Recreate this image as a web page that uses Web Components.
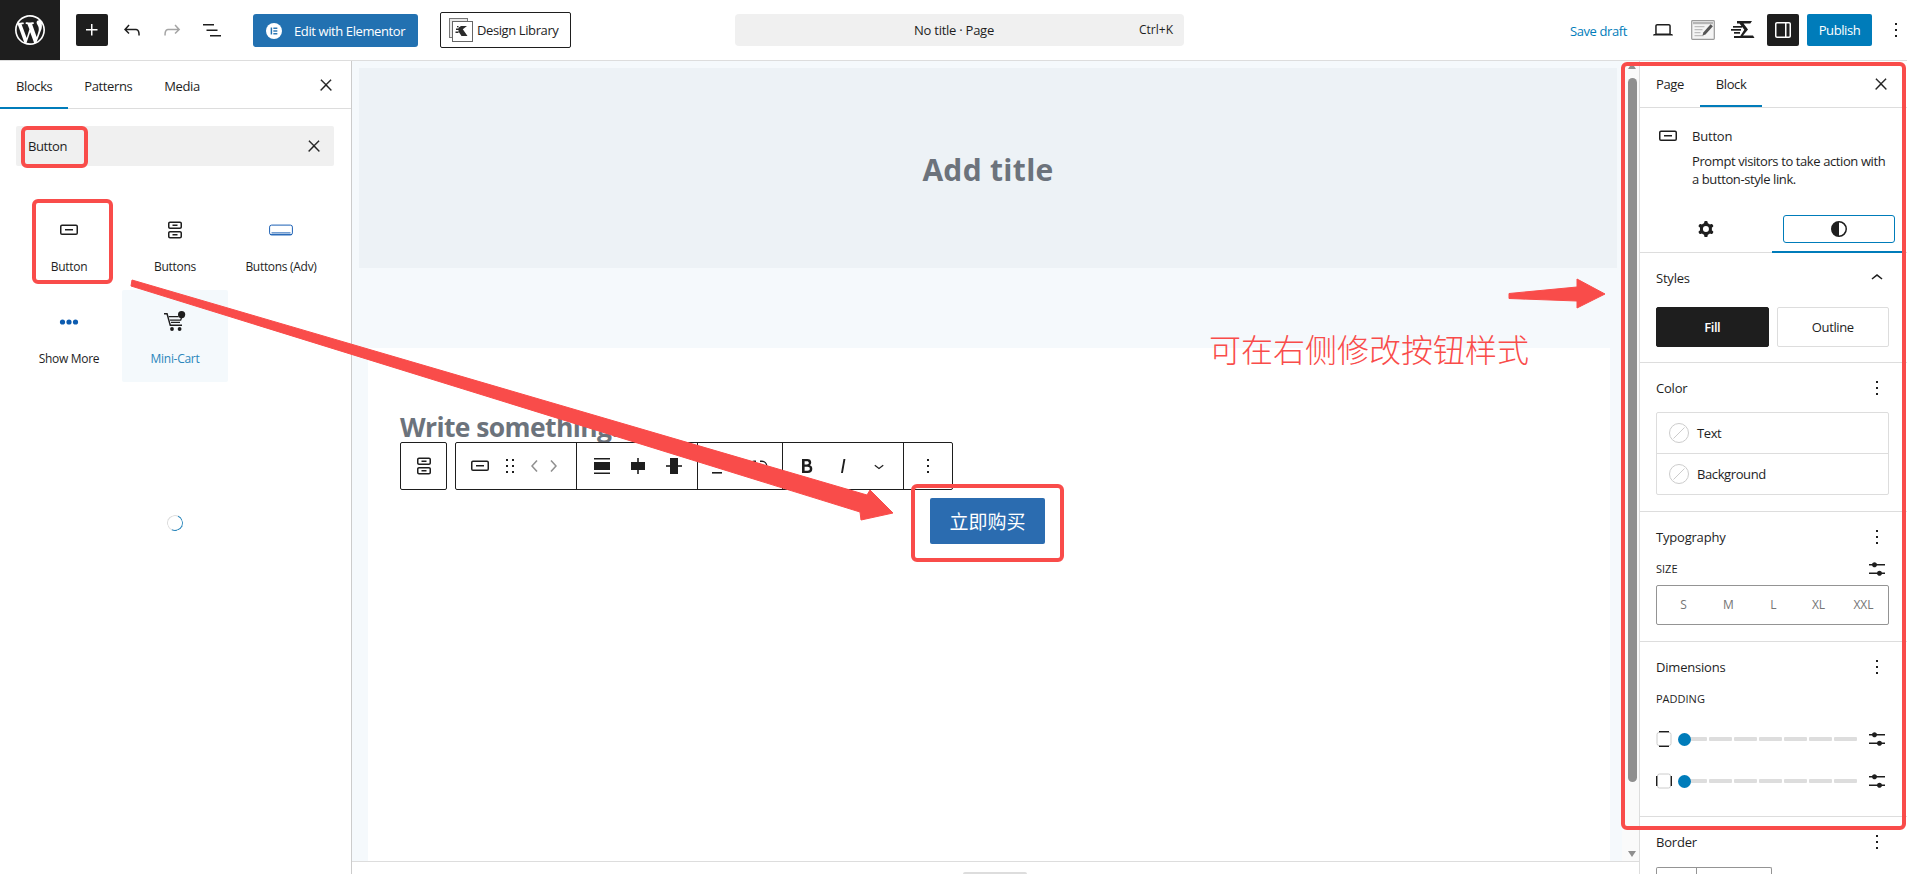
<!DOCTYPE html>
<html lang="en">
<head>
<meta charset="utf-8">
<title>No title - Page</title>
<style>
	html, body { margin: 0; padding: 0; height: 100%; overflow: hidden; background: #fff; }
	body { font: 13px/18px "Open Sans", "Noto Sans CJK SC", sans-serif; color: #1e1e1e; letter-spacing: -.4px; }
</style>
</head>
<body>
<wp-app>
	<wp-topbar slot="top"></wp-topbar>
	<wp-inserter slot="left"></wp-inserter>
	<wp-canvas slot="center"></wp-canvas>
	<wp-settings slot="right"></wp-settings>
	<wp-notes slot="notes"></wp-notes>
</wp-app>

<script>
const p = (d, extra = '') => `<path d="${d}" ${extra}/>`;

const ICONS = {
	wp: { box: '-2 -2 24 24', body: p('M20 10c0-5.51-4.49-10-10-10C4.48 0 0 4.49 0 10c0 5.52 4.48 10 10 10 5.51 0 10-4.48 10-10zM7.78 15.37L4.37 6.22c.55-.02 1.17-.08 1.17-.08.5-.06.44-1.13-.06-1.11 0 0-1.45.11-2.37.11-.18 0-.37 0-.58-.01C4.12 2.69 6.87 1.11 10 1.11c2.33 0 4.45.87 6.05 2.34-.68-.11-1.65.39-1.65 1.58 0 .74.45 1.36.9 2.1.35.61.55 1.36.55 2.46 0 1.49-1.4 5-1.4 5l-3.03-8.37c.54-.02.82-.17.82-.17.5-.05.44-1.25-.06-1.22 0 0-1.44.12-2.38.12-.87 0-2.33-.12-2.33-.12-.5-.03-.56 1.2-.06 1.22l.92.08 1.26 3.41zM17.41 10c.24-.64.74-1.87.43-4.25.7 1.29 1.05 2.71 1.05 4.25 0 3.29-1.73 6.24-4.4 7.78.97-2.59 1.94-5.2 2.92-7.78zM6.1 18.09C3.12 16.65 1.11 13.53 1.11 10c0-1.3.23-2.48.72-3.59C3.25 10.3 4.67 14.2 6.1 18.09zm4.03-6.63l2.58 6.98c-.86.29-1.76.45-2.71.45-.79 0-1.57-.11-2.29-.33.81-2.38 1.62-4.74 2.42-7.1z') },
	plus: { body: p('M11 12.5V17.5H12.5V12.5H17.5V11H12.5V6H11V11H6V12.5H11Z') },
	undo: { body: p('M18.3 11.7c-.6-.6-1.4-.9-2.3-.9H6.7l2.9-3.3-1.1-1-4.5 5L8.5 16l1-1-2.7-2.7H16c.5 0 .9.2 1.3.5 1 1 1 3.4 1 4.5v.3h1.5v-.2c0-1.5 0-4.3-1.5-5.7z') },
	redo: { body: p('M15.6 6.5l-1.1 1 2.9 3.3H8c-.9 0-1.7.3-2.3.9-1.4 1.5-1.4 4.2-1.4 5.6v.2h1.5v-.3c0-1.1 0-3.5 1-4.5.3-.3.7-.5 1.3-.5h9.2L14.5 15l1.1 1.1 4.6-4.6-4.6-5z') },
	list: { body: p('M3 6h11v1.5H3V6Zm3.5 5.5h11V13h-11v-1.5ZM21 17H10v1.5h11V17Z') },
	close: { box: '-4 -4 32 32', body: p('M13 11.8l6.1-6.3-1-1-6.1 6.2-6.1-6.2-1 1 6.1 6.3-6.5 6.7 1 1 6.5-6.6 6.5 6.6 1-1z', 'stroke="currentColor" stroke-width=".5"') },
	dots: { body: p('M13 19h-2v-2h2v2zm0-6h-2v-2h2v2zm0-6h-2V5h2v2z') },
	button: { body: p('M8 12.5h8V11H8v1.5Z M19 6.5H5a2 2 0 0 0-2 2V15a2 2 0 0 0 2 2h14a2 2 0 0 0 2-2V8.5a2 2 0 0 0-2-2ZM5 8h14a.5.5 0 0 1 .5.5V15a.5.5 0 0 1-.5.5H5a.5.5 0 0 1-.5-.5V8.5A.5.5 0 0 1 5 8Z') },
	buttons: { body: p('M14.5 17.5H9.5V16H14.5V17.5Z M14.5 8H9.5V6.5H14.5V8Z M7 3.5H17C18.1 3.5 19 4.4 19 5.5V9C19 10.1 18.1 11 17 11H7C5.9 11 5 10.1 5 9V5.5C5 4.4 5.9 3.5 7 3.5ZM17 5H7C6.7 5 6.5 5.2 6.5 5.5V9C6.5 9.3 6.7 9.5 7 9.5H17C17.3 9.5 17.5 9.3 17.5 9V5.5C17.5 5.2 17.3 5 17 5Z M7 13H17C18.1 13 19 13.9 19 15V18.5C19 19.6 18.1 20.5 17 20.5H7C5.9 20.5 5 19.6 5 18.5V15C5 13.9 5.9 13 7 13ZM17 14.5H7C6.7 14.5 6.5 14.7 6.5 15V18.5C6.5 18.8 6.7 19 7 19H17C17.3 19 17.5 18.8 17.5 18.5V15C17.5 14.7 17.3 14.5 17 14.5Z') },
	buttonsadv: { box: '0 0 24 24', body: '<rect x=".6" y="7.1" width="22.8" height="9.8" rx="2" fill="none" stroke="currentColor" stroke-width="1"/><rect x="2.500" y="14.400" width="19" height="1"/><rect x="1" y="16.200" width="22" height=".9"/>' },
	more: { body: '<circle cx="5.5" cy="12" r="2.6"/><circle cx="12" cy="12" r="2.6"/><circle cx="18.5" cy="12" r="2.6"/>' },
	cart: { box: '0 0 24 24', body: '<circle cx="18.6" cy="4.6" r="3.6"/><path d="M1 3h3.6l3.2 11.4H19v1.5H6.7L3.5 4.5H1z"/><path d="M5.6 6h10v1.3H6zM6.8 9.4h10.4l.6-1.6 1.3.5-1 2.4H7.2zM16 6.5l1 0" /><path d="M8 11.8h9v1.2H8z"/><circle cx="9" cy="19" r="1.9"/><circle cx="16.6" cy="19" r="1.9"/>' },
	cog: { body: p('M10.289 4.836A1 1 0 0 1 11.275 4h1.306a1 1 0 0 1 .987.836l.244 1.466c.787.26 1.503.679 2.108 1.218l1.393-.522a1 1 0 0 1 1.216.437l.653 1.13a1 1 0 0 1-.23 1.273l-1.148.944a6.025 6.025 0 0 1 0 2.435l1.149.946a1 1 0 0 1 .23 1.272l-.653 1.13a1 1 0 0 1-1.216.437l-1.394-.522c-.605.54-1.32.958-2.108 1.218l-.244 1.466a1 1 0 0 1-.987.836h-1.306a1 1 0 0 1-.986-.836l-.244-1.466a5.995 5.995 0 0 1-2.108-1.218l-1.394.522a1 1 0 0 1-1.217-.436l-.653-1.131a1 1 0 0 1 .23-1.272l1.149-.946a6.026 6.026 0 0 1 0-2.435l-1.148-.944a1 1 0 0 1-.23-1.272l.653-1.131a1 1 0 0 1 1.217-.437l1.393.522a5.994 5.994 0 0 1 2.108-1.218l.244-1.466ZM14.929 12a3 3 0 1 1-6 0 3 3 0 0 1 6 0Z', 'fill-rule="evenodd"') },
	contrast: { body: p('M12 4a8 8 0 1 0 0 16 8 8 0 0 0 0-16zm0 1.5a6.5 6.5 0 0 1 0 13z', 'fill-rule="evenodd"') },
	up: { body: p('M6.5 12.4L12 8l5.5 4.4-.9 1.2L12 10l-4.6 3.6-.9-1.2z') },
	down: { body: p('M17.5 11.6L12 16l-5.5-4.4.9-1.2L12 14l4.6-3.6 1 1.2z') },
	sliders: { body: p('M14.5 13.8c-1.1 0-2.1.7-2.4 1.8H4V17h8.1c.3 1 1.3 1.8 2.4 1.8s2.1-.7 2.4-1.8H20v-1.5h-3.1c-.3-1-1.3-1.7-2.4-1.7zM11.9 7c-.3-1-1.3-1.8-2.4-1.8S7.4 6 7.1 7H4v1.5h3.1c.3 1 1.3 1.8 2.4 1.8s2.1-.7 2.4-1.8H20V7h-8.1z') },
	drag: { body: p('M8 7h2V5H8v2zm0 6h2v-2H8v2zm0 6h2v-2H8v2zm6-14v2h2V5h-2zm0 8h2v-2h-2v2zm0 6h2v-2h-2v2z') },
	chevl: { body: p('M14.6 7l-1.2-1L8 12l5.400 6 1.200-1-4.600-5z') },
	chevr: { body: p('M10.600 6L9.400 7l4.600 5-4.600 5 1.200 1 5.400-6z') },
	laptop: { body: p('M20.5 16h-.7V8c0-1.1-.9-2-2-2H6.2c-1.1 0-2 .9-2 2v8h-.7c-.8 0-1.5.7-1.5 1.5h20c0-.8-.7-1.5-1.5-1.5zM5.7 8c0-.3.2-.5.5-.5h11.600c.3 0 .5.2.5.5v7.600H5.700V8z') },
	panel: { body: p('M18 4H6c-1.1 0-2 .9-2 2v12c0 1.1.9 2 2 2h12c1.1 0 2-.9 2-2V6c0-1.1-.9-2-2-2zM5.500 18V6c0-.3.2-.5.5-.5h8v13H6c-.3 0-.5-.2-.5-.5zm13 0c0 .3-.2.5-.5.5h-2.500v-13H18c.3 0 .5.2.5.5v12z') },
	alignA: { body: '<rect x="4" y="4" width="16" height="1.5"/><rect x="4" y="8" width="16" height="8"/><rect x="4" y="18.5" width="16" height="1.5"/>' },
	alignB: { body: '<rect x="11.2" y="4" width="1.6" height="16"/><rect x="5" y="8" width="14" height="8"/>' },
	alignC: { body: '<rect x="4" y="11.2" width="16" height="1.6"/><rect x="8" y="4" width="8" height="16"/>' },
	link: { body: p('M10 17.400H8a5.400 5.400 0 0 1 0-10.800h2V8H8a4 4 0 0 0 0 8h2zM14 6.600h2a5.400 5.400 0 0 1 0 10.800h-2V16h2a4 4 0 0 0 0-8h-2z') },
	underline: { body: '<rect x="5" y="18" width="10" height="1.6"/>' },
	italic: { body: p('M12.500 5L10 19h1.900l2.500-14z') },
	bold: { body: p('M14.700 11.300c1-.6 1.500-1.600 1.500-3 0-2.300-1.300-3.400-4-3.400H7v14h5.800c1.400 0 2.500-.3 3.300-1 .8-.7 1.200-1.700 1.200-2.900.1-1.900-.8-3.100-2.600-3.700zm-5.100-4h2.300c.6 0 1.100.1 1.400.4.3.3.5.7.5 1.200s-.2 1-.5 1.200c-.3.3-.8.4-1.400.4H9.600V7.300zm4.600 9c-.4.3-1 .4-1.700.4H9.600v-3.900h2.900c.7 0 1.300.2 1.700.5.4.3.6.8.6 1.500s-.2 1.200-.6 1.500z') },
	edit: { box: '0 0 24 24', body: '<rect x=".7" y="2.700" width="22.600" height="18.600" rx=".8" fill="#f4f4f4" stroke="#9a9a9a" stroke-width="1.200"/><path d="M2 4h20v2.200H2z" fill="#b5b5b5"/><path d="M3.500 8h10v1.300h-10zM3.500 11h8v1.300h-8zM3.500 14h6v1.300h-6zM3.500 17h9v1.300h-9z" fill="#bdbdbd"/><path d="M19.600 6.200l2.300 2-7.400 8.200-3 1 .8-3z" fill="#555"/>' },
	speed: { box: '0 0 24 24', body: p('M6 3h15l-1.700 2.400H12.500l4.500 6-5 6.100H22L23.500 20H8l5.300-8.200L8.500 5.400H6z') + '<rect x="2" y="8" width="9" height="1.700"/><rect x="0" y="11" width="10" height="1.700"/><rect x="3" y="14" width="6" height="1.700"/><rect x="3" y="18" width="7" height="2"/>' },
	library: { box: '0 0 24 24', body: '<rect x=".5" y=".5" width="18" height="19" fill="#e9e9e9" stroke="#777"/><rect x="3.500" y="3.500" width="20" height="20" fill="#fff" stroke="#666"/><path d="M8 8h1.500v1.800L12 8h6l-4.200 3.200L18.500 18h-6l-3-4.500V15H6.500v-1.500H9.500V12H7v-1.500h2.500V9.300H8z" fill="#2b2b2b"/>' },
	elementor: { box: '0 0 24 24', body: '<circle cx="12" cy="12" r="12" fill="#fff"/><rect x="7" y="6.800" width="2.200" height="10.400" fill="#2271b1"/><rect x="11" y="6.800" width="6" height="2.100" fill="#2271b1"/><rect x="11" y="10.950" width="6" height="2.100" fill="#2271b1"/><rect x="11" y="15.100" width="6" height="2.100" fill="#2271b1"/>' },
	pad1: { box: '0 0 16 16', body: '<rect x="1" y="1.500" width="14" height="13" rx="2" fill="none" stroke="#ccc"/><rect x="3" y="0" width="10" height="1.300" fill="#1e1e1e"/><rect x="3" y="14.700" width="10" height="1.300" fill="#1e1e1e"/>' },
	pad2: { box: '0 0 16 16', body: '<rect x="1.500" y="1" width="13" height="14" rx="2" fill="none" stroke="#ccc"/><rect x="0" y="3" width="1.300" height="10" fill="#1e1e1e"/><rect x="14.700" y="3" width="1.300" height="10" fill="#1e1e1e"/>' },
	none: { box: '0 0 20 20', body: '<circle cx="10" cy="10" r="9.500" fill="#fff" stroke="#ccc"/><path d="M4.500 15.500L15.500 4.500" stroke="#ccc" fill="none"/>' }
};

class WpIcon extends HTMLElement {
	connectedCallback() {
		const icon = ICONS[this.getAttribute('name')];
		const size = this.getAttribute('size') || 24;
		this.attachShadow({ mode: 'open' }).innerHTML = `
			<style>
				:host { display: inline-flex; flex: none; width: ${size}px; height: ${size}px; }
				svg { display: block; fill: currentColor; }
			</style>
			<svg xmlns="http://www.w3.org/2000/svg" width="${size}" height="${size}" viewBox="${icon.box || '0 0 24 24'}">${icon.body}</svg>
		`;
	}
}

class WpApp extends HTMLElement {
	constructor() {
		super();
		this.attachShadow({ mode: 'open' }).innerHTML = `
			<style>
				:host {
					display: grid;
					position: relative;
					width: 1907px;
					height: 874px;
					overflow: hidden;
					grid-template: 61px 813px / 352px 1287px 268px;
				}
				::slotted([slot="top"]) { grid-column: 1 / -1; }
			</style>
			<slot name="top"></slot>
			<slot name="left"></slot>
			<slot name="center"></slot>
			<slot name="right"></slot>
			<slot name="notes"></slot>
		`;
	}
}

class WpTopbar extends HTMLElement {
	constructor() {
		super();
		this.attachShadow({ mode: 'open' }).innerHTML = `
			<style>
				:host {
					display: flex;
					align-items: flex-start;
					height: 60px;
					border-bottom: 1px solid #ddd;
					background: #fff;
					font-size: 13px;
				}
				.logo {
					display: flex; align-items: center; justify-content: center;
					width: 60px; height: 60px;
					background: #1e1e1e; color: #fff;
				}
				.tool { margin-top: 18px; display: flex; }
				.tool.off { color: #a5a5a5; }
				.inserter {
					display: flex; align-items: center; justify-content: center;
					width: 32px; height: 32px; margin: 14px 0 0 16px;
					background: #1e1e1e; color: #fff; border-radius: 2px;
				}
				.elementor {
					display: flex; align-items: center;
					width: 165px; height: 33px; margin: 14px 0 0 29px; padding-left: 13px;
					box-sizing: border-box;
					background: #2271b1; color: #fff; border-radius: 3px;
				}
				.elementor span { margin-left: 12px; }
				.library {
					display: flex; align-items: center;
					width: 131px; height: 36px; margin: 12px 0 0 22px; padding-left: 8px;
					box-sizing: border-box;
					border: 1px solid #1e1e1e; border-radius: 2px;
				}
				.library span { margin-left: 4px; }
				.command {
					display: grid; grid-template-columns: 1fr auto 1fr; align-items: center;
					width: 449px; height: 32px; margin: 14px 0 0 164px; padding: 0 11px 0 0;
					box-sizing: border-box;
					background: #f0f0f0; border-radius: 4px; letter-spacing: -.25px;
				}
				.command span:last-child { justify-self: end; font-size: 12px; letter-spacing: 0; }
				.right { display: flex; align-items: flex-start; margin-left: auto; }
				.save { margin-top: 22px; color: #007cba; white-space: nowrap; margin-right: 24px; }
				.right .tool + .tool { margin-left: 16px; }
				.panel {
					display: flex; align-items: center; justify-content: center;
					width: 32px; height: 32px; margin: 14px 0 0 12px;
					background: #1e1e1e; color: #fff; border-radius: 2px;
				}
				.publish {
					display: flex; align-items: center; justify-content: center;
					width: 65px; height: 32px; margin: 14px 0 0 8px;
					background: #007cba; color: #fff; border-radius: 2px;
				}
				.more { width: 23px; margin: 18px 0 0 12px; }
			</style>
			<div class="logo"><wp-icon name="wp" size="36"></wp-icon></div>
			<div class="inserter"><wp-icon name="plus"></wp-icon></div>
			<div class="tool" style="margin-left:12px"><wp-icon name="undo"></wp-icon></div>
			<div class="tool off" style="margin-left:16px"><wp-icon name="redo"></wp-icon></div>
			<div class="tool" style="margin-left:16px"><wp-icon name="list"></wp-icon></div>
			<div class="elementor"><wp-icon name="elementor" size="16"></wp-icon><span>Edit with Elementor</span></div>
			<div class="library"><wp-icon name="library" size="24"></wp-icon><span>Design Library</span></div>
			<div class="command"><span></span><span>No title · Page</span><span>Ctrl+K</span></div>
			<div class="right">
				<span class="save">Save draft</span>
				<div class="tool"><wp-icon name="laptop"></wp-icon></div>
				<div class="tool"><wp-icon name="edit"></wp-icon></div>
				<div class="tool"><wp-icon name="speed"></wp-icon></div>
				<div class="panel"><wp-icon name="panel"></wp-icon></div>
				<div class="publish">Publish</div>
				<div class="tool more"><wp-icon name="dots"></wp-icon></div>
			</div>
		`;
	}
}

class BlockItem extends HTMLElement {
	connectedCallback() {
		const icon = this.getAttribute('icon');
		this.attachShadow({ mode: 'open' }).innerHTML = `
			<style>
				:host {
					display: flex; flex-direction: column; align-items: center;
					height: 92px; padding-top: 20px; box-sizing: border-box;
					font-size: 12px; line-height: 18px; border-radius: 2px;
					color: #1e1e1e; letter-spacing: -.3px;
				}
				:host([active]) { background: #f4f9fc; color: #2a86bb; }
				wp-icon { color: ${this.getAttribute('tint') || '#1e1e1e'}; }
				span { margin-top: 16px; white-space: nowrap; }
			</style>
			<wp-icon name="${icon}"></wp-icon>
			<span><slot></slot></span>
		`;
	}
}

class WpInserter extends HTMLElement {
	constructor() {
		super();
		this.attachShadow({ mode: 'open' }).innerHTML = `
			<style>
				:host {
					display: flex; flex-direction: column;
					border-right: 1px solid #ccc;
					background: #fff;
				}
				.tabs {
					display: flex; align-items: center; height: 47px;
					border-bottom: 1px solid #ddd;
					padding-right: 13px;
				}
				.tabs span { padding: 2px 16px 0; height: 46px; line-height: 46px; }
				.tabs .on { box-shadow: inset 0 -2px 0 #007cba; }
				.tabs wp-icon { margin-left: auto; }
				.search {
					display: flex; align-items: center; justify-content: space-between;
					height: 40px; margin: 17px 17px 0 16px; padding: 0 8px 0 12px;
					background: #f0f0f0; border-radius: 2px;
				}
				.grid {
					display: grid; grid-template-columns: repeat(3, 106px);
					margin: 32px 0 0 16px;
				}
				.spin {
					width: 16px; height: 16px; margin: 133px 0 0 167px;
					border-radius: 50%; box-sizing: border-box;
					border: 1.500px solid #ddd;
					border-right-color: #2a86bb; border-bottom-color: #2a86bb;
					transform: rotate(-20deg);
				}
			</style>
			<div class="tabs">
				<span class="on">Blocks</span><span>Patterns</span><span>Media</span>
				<wp-icon name="close"></wp-icon>
			</div>
			<div class="search"><span>Button</span><wp-icon name="close"></wp-icon></div>
			<div class="grid">
				<block-item icon="button">Button</block-item>
				<block-item icon="buttons">Buttons</block-item>
				<block-item icon="buttonsadv" tint="#1a5fb4">Buttons (Adv)</block-item>
				<block-item icon="more" tint="#0d5cb0">Show More</block-item>
				<block-item icon="cart" active>Mini-Cart</block-item>
			</div>
			<div class="spin"></div>
		`;
	}
}

class BlockToolbar extends HTMLElement {
	constructor() {
		super();
		const tb = (name, w = 36, size = 24) =>
			`<span class="b" style="width:${w}px"><wp-icon name="${name}" size="${size}"></wp-icon></span>`;
		this.attachShadow({ mode: 'open' }).innerHTML = `
			<style>
				:host {
					display: flex; position: absolute; left: 32px; top: 94px;
					height: 48px; color: #1e1e1e;
				}
				.box {
					display: flex; height: 48px; box-sizing: border-box;
					border: 1px solid #1e1e1e; border-radius: 2px; background: #fff;
				}
				.first { width: 47px; align-items: center; justify-content: center; margin-right: 8px; }
				.main { width: 498px; }
				.g { display: flex; align-items: center; box-sizing: border-box; height: 46px; border-left: 1px solid #1e1e1e; padding-left: 7px; }
				.g:first-child { border-left: 0; }
				.b { display: flex; align-items: center; justify-content: center; }
				.off { color: #909090; }
			</style>
			<div class="box first"><wp-icon name="buttons"></wp-icon></div>
			<div class="box main">
				<div class="g" style="width:120px;padding-left:12px">
					${tb('button', 24)}
					<span class="b" style="width:24px;margin-left:6px"><wp-icon name="drag"></wp-icon></span>
					<span class="b off" style="width:18px;margin-left:4px"><wp-icon name="chevl"></wp-icon></span>
					<span class="b off" style="width:18px"><wp-icon name="chevr"></wp-icon></span>
				</div>
				<div class="g" style="width:121px">${tb('alignA')}${tb('alignB')}${tb('alignC')}</div>
				<div class="g" style="width:86px;padding-left:3px">${tb('underline', 36)}${tb('link', 42)}</div>
				<div class="g" style="width:121px;padding-left:6px">${tb('bold')}${tb('italic')}${tb('down', 36, 20)}</div>
				<div class="g" style="width:49px;padding-left:0;justify-content:center">${tb('dots', 24)}</div>
			</div>
		`;
	}
}

class WpCanvas extends HTMLElement {
	constructor() {
		super();
		this.attachShadow({ mode: 'open' }).innerHTML = `
			<style>
				:host { display: flex; flex-direction: column; min-width: 0; background: #fff; }
				.scroll { display: flex; flex: 1; min-height: 0; background: #f5f9fc; }
				.page { flex: 1; min-width: 0; display: flex; flex-direction: column; padding: 7px 5px 0 7px; }
				.title {
					display: flex; align-items: center; justify-content: center;
					height: 200px; flex: none; box-sizing: border-box; padding-top: 4px;
					background: #edf2f6; color: #6c737c;
					font: 700 30px/40px "Open Sans", sans-serif; letter-spacing: .3px;
				}
				.body {
					position: relative; flex: 1;
					margin: 80px 7px 0 9px; padding: 60px 0 0 32px;
					background: #fff; overflow: visible;
				}
				.write { color: #6c737c; font: 700 26.500px/38px "Open Sans", sans-serif; letter-spacing: -.6px; }
				.buy {
					display: flex; align-items: center; justify-content: center;
					width: 115px; height: 46px; margin: 52px 0 0 530px;
					background: #2b6cb0; color: #fff; border-radius: 2px;
					font: 19px/24px "Noto Sans CJK SC", sans-serif; letter-spacing: 0;
				}
				.bar {
					position: relative; flex: none; width: 17px; background: #fafafa;
				}
				.thumb { position: absolute; left: 6px; top: 17px; width: 9px; height: 704px; background: #8f8f8f; border-radius: 5px; }
				.arrow { position: absolute; left: 6px; width: 0; height: 0; border-left: 4.500px solid transparent; border-right: 4.500px solid transparent; }
				.arrow.a { top: 2px; border-bottom: 6px solid #8f8f8f; }
				.arrow.b { bottom: 4px; border-top: 6px solid #8f8f8f; }
				.foot { position: relative; flex: none; height: 12px; border-top: 1px solid #ddd; background: #fff; }
				.handle { position: absolute; left: 611px; top: 10px; width: 64px; height: 4px; border-radius: 2px 2px 0 0; background: #ddd; }
			</style>
			<div class="scroll">
				<div class="page">
					<div class="title">Add title</div>
					<div class="body">
						<div class="write">Write something...</div>
						<block-toolbar></block-toolbar>
						<div class="buy">立即购买</div>
					</div>
				</div>
				<div class="bar">
					<div class="arrow a"></div>
					<div class="thumb"></div>
					<div class="arrow b"></div>
				</div>
			</div>
			<div class="foot"><div class="handle"></div></div>
		`;
	}
}

class PanelSection extends HTMLElement {
	connectedCallback() {
		const action = this.getAttribute('action') || 'dots';
		this.attachShadow({ mode: 'open' }).innerHTML = `
			<style>
				:host {
					display: block; flex: none;
					padding: 16px 18px ${this.getAttribute('pad') || 15}px 16px;
					border-bottom: 1px solid #ddd;
				}
				.head { display: flex; align-items: center; justify-content: space-between; height: 18px; font-weight: 500; letter-spacing: -.2px; }
			</style>
			<div class="head"><span>${this.getAttribute('heading')}</span><wp-icon name="${action}"></wp-icon></div>
			<slot></slot>
		`;
	}
}

class WpSlider extends HTMLElement {
	connectedCallback() {
		this.attachShadow({ mode: 'open' }).innerHTML = `
			<style>
				:host { display: flex; align-items: center; height: 24px; }
				.track { position: relative; display: flex; gap: 2px; width: 177px; margin: 0 8px; padding-left: 4px; box-sizing: border-box; }
				.track i { flex: 1; height: 4px; background: #ddd; border-radius: 1px; }
				.thumb { position: absolute; left: -2px; top: -4.500px; width: 13px; height: 13px; border-radius: 50%; background: #007cba; }
			</style>
			<wp-icon name="${this.getAttribute('icon')}" size="16"></wp-icon>
			<div class="track"><i></i><i></i><i></i><i></i><i></i><i></i><i></i><span class="thumb"></span></div>
			<wp-icon name="sliders"></wp-icon>
		`;
	}
}

class WpSettings extends HTMLElement {
	constructor() {
		super();
		const colorRow = (label, extra = '') =>
			`<div class="crow" style="${extra}"><wp-icon name="none" size="20"></wp-icon><span>${label}</span></div>`;
		this.attachShadow({ mode: 'open' }).innerHTML = `
			<style>
				:host {
					display: flex; flex-direction: column; overflow: hidden;
					border-left: 1px solid #ddd; background: #fff;
				}
				.tabs { display: flex; align-items: center; flex: none; height: 46px; border-bottom: 1px solid #ddd; padding-right: 14px; }
				.tabs span { padding: 0 16px; line-height: 46px; height: 46px; }
				.tabs .on { box-shadow: inset 0 -2px 0 #007cba; }
				.tabs wp-icon { margin-left: auto; }
				.card { display: flex; flex: none; padding: 16px 18px 0 16px; }
				.card wp-icon { margin-right: 12px; }
				.card b { display: block; font-weight: 500; line-height: 24px; letter-spacing: -.2px; }
				.card p { margin: 4px 0 0; white-space: nowrap; }
				.mode { display: grid; grid-template-columns: 132px 130px; flex: none; height: 45px; margin-top: 20px; box-sizing: border-box; border-bottom: 1px solid #ddd; }
				.mode div { display: flex; justify-content: center; align-items: center; height: 44px; padding-bottom: 2px; box-sizing: border-box; }
				.mode .sel { box-shadow: 0 1px 0 0 #007cba, inset 0 -1px 0 #007cba; }
				.mode .sel span { display: flex; align-items: center; justify-content: center; box-sizing: border-box; width: 112px; height: 28px; margin-left: 4px; border: 1.500px solid #007cba; border-radius: 3px; }
				.styles { display: grid; grid-template-columns: 1fr 1fr; gap: 8px; margin-top: 20px; }
				.styles div { display: flex; align-items: center; justify-content: center; height: 40px; box-sizing: border-box; border-radius: 2px; border: 1px solid #ddd; }
				.styles .fill { background: #1e1e1e; border-color: #1e1e1e; color: #fff; font-weight: 600; }
				.colors { margin-top: 15px; border: 1px solid #ddd; border-radius: 2px; }
				.crow { display: flex; align-items: center; height: 40px; padding-left: 12px; }
				.crow span { margin-left: 8px; }
				.label { display: flex; align-items: center; justify-content: space-between; font-size: 11px; height: 18px; letter-spacing: 0; }
				.sizes { display: grid; grid-template-columns: repeat(5, 45px); height: 40px; align-items: center; justify-items: center; padding: 0 4px; box-sizing: border-box; border: 1px solid #949494; border-radius: 2px; color: #757575; font-size: 12px; letter-spacing: 0; }
				.rows { display: flex; flex-direction: column; gap: 18px; margin-top: 19px; }
				.border-box { display: flex; width: 116px; height: 30px; margin-top: 16px; box-sizing: border-box; border: 1px solid #949494; border-bottom: 0; border-radius: 2px 2px 0 0; }
				.border-box i { width: 39px; border-right: 1px solid #949494; }
			</style>
			<div class="tabs"><span>Page</span><span class="on">Block</span><wp-icon name="close"></wp-icon></div>
			<div class="card">
				<wp-icon name="button"></wp-icon>
				<div><b>Button</b><p>Prompt visitors to take action with<br>a button-style link.</p></div>
			</div>
			<div class="mode">
				<div><wp-icon name="cog"></wp-icon></div>
				<div class="sel"><span><wp-icon name="contrast"></wp-icon></span></div>
			</div>
			<panel-section heading="Styles" action="up">
				<div class="styles"><div class="fill">Fill</div><div>Outline</div></div>
			</panel-section>
			<panel-section heading="Color" pad="16">
				<div class="colors">${colorRow('Text', 'border-bottom:1px solid #ddd')}${colorRow('Background')}</div>
			</panel-section>
			<panel-section heading="Typography" pad="16">
				<div class="label" style="margin-top:14px"><span>SIZE</span><wp-icon name="sliders"></wp-icon></div>
				<div class="sizes" style="margin-top:7px"><span>S</span><span>M</span><span>L</span><span>XL</span><span>XXL</span></div>
			</panel-section>
			<panel-section heading="Dimensions" pad="23">
				<div class="label" style="margin-top:14px"><span>PADDING</span></div>
				<div class="rows"><wp-slider icon="pad1"></wp-slider><wp-slider icon="pad2"></wp-slider></div>
			</panel-section>
			<panel-section heading="Border" pad="0">
				<div class="border-box"><i></i></div>
			</panel-section>
		`;
	}
}

class WpNotes extends HTMLElement {
	constructor() {
		super();
		const red = '#f94c4a';
		const box = (x1, y1, x2, y2) =>
			`<rect x="${x1 + 2}" y="${y1 + 2}" width="${x2 - x1 - 4}" height="${y2 - y1 - 4}" rx="4" fill="none" stroke="${red}" stroke-width="4"/>`;
		this.attachShadow({ mode: 'open' }).innerHTML = `
			<style>
				:host { position: absolute; left: 0; top: 0; width: 1907px; height: 874px; pointer-events: none; }
				svg { position: absolute; left: 0; top: 0; }
				.note {
					position: absolute; left: 1209px; top: 326px;
					color: ${red}; white-space: nowrap; letter-spacing: 0;
					font: 300 32px/44px "Noto Sans CJK SC", sans-serif;
				}
			</style>
			<svg xmlns="http://www.w3.org/2000/svg" width="1907" height="874">
				${box(21, 126, 88, 168)}
				${box(32, 199, 113, 284)}
				${box(911, 484, 1064, 562)}
				${box(1621, 62, 1906, 830)}
				<path d="M132 280 L867 495 L870 490 L893 513 L861 520 L860 512 L131 286 Z" fill="${red}" stroke="${red}" stroke-width="1" stroke-linejoin="round"/>
				<path d="M1509 293.500 L1577 287 L1577 279 L1605 294 L1577 308 L1577 301 L1509 298.500 Z" fill="${red}" stroke="${red}" stroke-width="1" stroke-linejoin="round"/>
			</svg>
			<div class="note">可在右侧修改按钮样式</div>
		`;
	}
}

customElements.define('wp-icon', WpIcon);
customElements.define('wp-app', WpApp);
customElements.define('wp-topbar', WpTopbar);
customElements.define('block-item', BlockItem);
customElements.define('wp-inserter', WpInserter);
customElements.define('block-toolbar', BlockToolbar);
customElements.define('wp-canvas', WpCanvas);
customElements.define('panel-section', PanelSection);
customElements.define('wp-slider', WpSlider);
customElements.define('wp-settings', WpSettings);
customElements.define('wp-notes', WpNotes);
</script>
</body>
</html>
